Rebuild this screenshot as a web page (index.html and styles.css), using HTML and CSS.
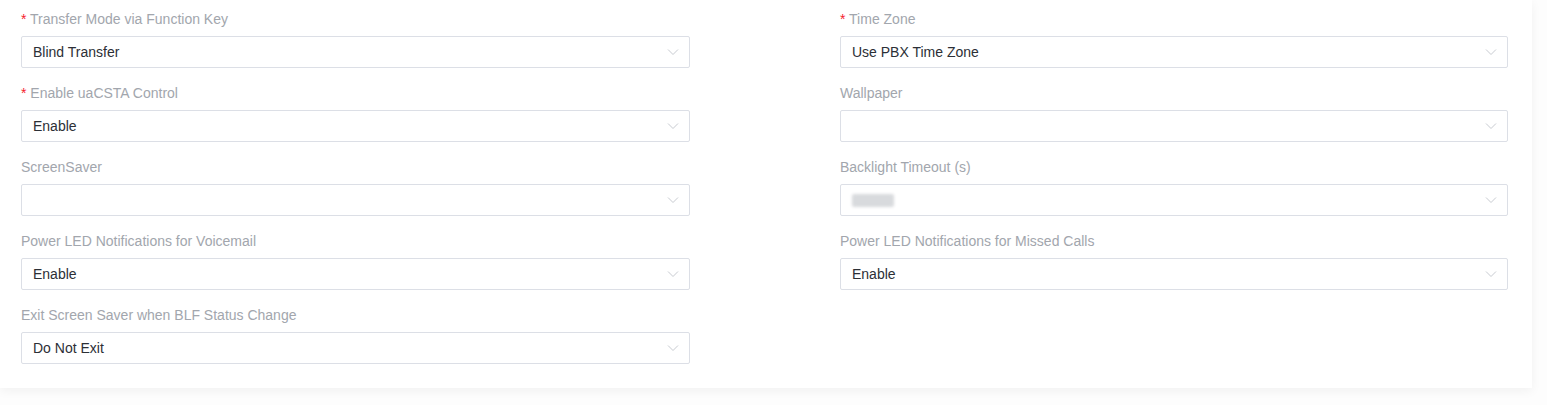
FILE: index.html
```html
<!DOCTYPE html>
<html lang="en">
<head>
<meta charset="utf-8">
<title>Settings</title>
<link rel="stylesheet" href="styles.css">
</head>
<body>
<div class="page">
  <div class="card">
    <div class="grid">
      <div class="item">
        <label class="label"><span class="req">*</span> Transfer Mode via Function Key</label>
        <div class="select"><span class="value">Blind Transfer</span><svg class="chev" viewBox="0 0 12 8"><path d="M1 1.5 L6 6.5 L11 1.5" /></svg></div>
      </div>
      <div class="item">
        <label class="label"><span class="req">*</span> Time Zone</label>
        <div class="select"><span class="value">Use PBX Time Zone</span><svg class="chev" viewBox="0 0 12 8"><path d="M1 1.5 L6 6.5 L11 1.5" /></svg></div>
      </div>
      <div class="item">
        <label class="label"><span class="req">*</span> Enable uaCSTA Control</label>
        <div class="select"><span class="value">Enable</span><svg class="chev" viewBox="0 0 12 8"><path d="M1 1.5 L6 6.5 L11 1.5" /></svg></div>
      </div>
      <div class="item">
        <label class="label">Wallpaper</label>
        <div class="select"><span class="value"></span><svg class="chev" viewBox="0 0 12 8"><path d="M1 1.5 L6 6.5 L11 1.5" /></svg></div>
      </div>
      <div class="item">
        <label class="label">ScreenSaver</label>
        <div class="select"><span class="value"></span><svg class="chev" viewBox="0 0 12 8"><path d="M1 1.5 L6 6.5 L11 1.5" /></svg></div>
      </div>
      <div class="item">
        <label class="label">Backlight Timeout (s)</label>
        <div class="select"><span class="value"><span class="blur"></span></span><svg class="chev" viewBox="0 0 12 8"><path d="M1 1.5 L6 6.5 L11 1.5" /></svg></div>
      </div>
      <div class="item">
        <label class="label">Power LED Notifications for Voicemail</label>
        <div class="select"><span class="value">Enable</span><svg class="chev" viewBox="0 0 12 8"><path d="M1 1.5 L6 6.5 L11 1.5" /></svg></div>
      </div>
      <div class="item">
        <label class="label">Power LED Notifications for Missed Calls</label>
        <div class="select"><span class="value">Enable</span><svg class="chev" viewBox="0 0 12 8"><path d="M1 1.5 L6 6.5 L11 1.5" /></svg></div>
      </div>
      <div class="item">
        <label class="label">Exit Screen Saver when BLF Status Change</label>
        <div class="select"><span class="value">Do Not Exit</span><svg class="chev" viewBox="0 0 12 8"><path d="M1 1.5 L6 6.5 L11 1.5" /></svg></div>
      </div>
    </div>
  </div>
</div>
</body>
</html>
```

FILE: styles.css
```css
* { box-sizing: border-box; }
html, body {
  margin: 0;
  padding: 0;
  background: #fdfdfd;
  font-family: "Liberation Sans", Arial, sans-serif;
}
.page {
  width: 1532px;
  height: 405px;
}
.card {
  background: #ffffff;
  padding: 8px 24px 10px 21px;
  box-shadow: 0 3px 10px rgba(0, 0, 0, 0.05);
}
.grid {
  display: grid;
  grid-template-columns: 669px 668px;
  column-gap: 150px;
}
.item {
  display: flex;
  flex-direction: column;
  margin-bottom: 14px;
}
.label {
  display: block;
  height: 22px;
  line-height: 22px;
  font-size: 14px;
  color: #a2a6ad;
  margin-bottom: 6px;
}
.req {
  color: #f5222d;
  font-size: 14px;
}
.select {
  height: 32px;
  border: 1px solid #dcdfe6;
  border-radius: 2px;
  display: flex;
  align-items: center;
  justify-content: space-between;
  padding: 0 10px 0 11px;
  background: #fff;
}
.value {
  font-size: 14px;
  color: #2c2f36;
  line-height: 20px;
}
.blur {
  display: inline-block;
  width: 42px;
  height: 13px;
  margin-top: 4px;
  background: #d8dadd;
  border-radius: 2px;
  filter: blur(1.5px);
  vertical-align: top;
}
.chev {
  width: 12px;
  height: 8px;
  fill: none;
  stroke: #c8cbd1;
  stroke-width: 1;
}
```
